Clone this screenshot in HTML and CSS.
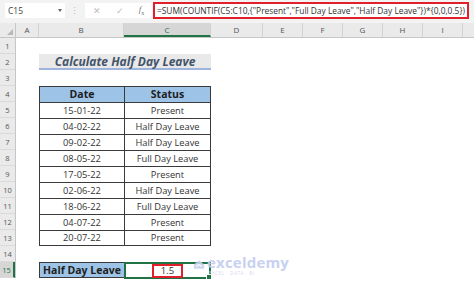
FILE: index.html
```html
<!DOCTYPE html>
<html lang="en">
<head>
  <meta charset="UTF-8">
  <meta name="viewport" content="width=device-width, initial-scale=1.0">
  <title>Calculate Half Day Leave</title>
  <link rel="stylesheet" href="styles.css">
</head>
<body>
  <div class="app">
    <div class="toolbar">
      <div class="namebox">
        <span>C15</span>
        <span class="caret"></span>
      </div>
      <div class="grip">⋮</div>
      <div class="fx-buttons">
        <span class="btn">✕</span>
        <span class="btn">✓</span>
        <span class="btn fx"><i>f</i><sub>x</sub></span>
      </div>
      <div class="formula">
        <span class="formula-box">=SUM(COUNTIF(C5:C10,{"Present","Full Day Leave","Half Day Leave"})*{0,0,0.5})</span>
      </div>
    </div>

    <div class="colheads">
      <div class="corner"><span class="tri"></span></div>
      <div class="colhead col-a">A</div>
      <div class="colhead col-b">B</div>
      <div class="colhead col-c active">C</div>
      <div class="colhead col-d">D</div>
      <div class="colhead col-e">E</div>
      <div class="colhead col-e">F</div>
      <div class="colhead col-e">G</div>
      <div class="colhead col-e">H</div>
      <div class="colhead col-e">I</div>
      <div class="colhead rest"></div>
    </div>

    <div class="sheet">
      <div class="rowheads">
        <div class="rowhead">1</div>
        <div class="rowhead">2</div>
        <div class="rowhead">3</div>
        <div class="rowhead">4</div>
        <div class="rowhead">5</div>
        <div class="rowhead">6</div>
        <div class="rowhead">7</div>
        <div class="rowhead">8</div>
        <div class="rowhead">9</div>
        <div class="rowhead">10</div>
        <div class="rowhead">11</div>
        <div class="rowhead">12</div>
        <div class="rowhead">13</div>
        <div class="rowhead">14</div>
        <div class="rowhead active">15</div>
      </div>

      <div class="cells">
        <div class="row"></div>
        <div class="row">
          <div class="title">Calculate Half Day Leave</div>
        </div>
        <div class="row"></div>
        <div class="row">
          <div class="cell col-b head">Date</div>
          <div class="cell col-c head last">Status</div>
        </div>
        <div class="row">
          <div class="cell col-b">15-01-22</div>
          <div class="cell col-c last">Present</div>
        </div>
        <div class="row">
          <div class="cell col-b">04-02-22</div>
          <div class="cell col-c last">Half Day Leave</div>
        </div>
        <div class="row">
          <div class="cell col-b">09-02-22</div>
          <div class="cell col-c last">Half Day Leave</div>
        </div>
        <div class="row">
          <div class="cell col-b">08-05-22</div>
          <div class="cell col-c last">Full Day Leave</div>
        </div>
        <div class="row">
          <div class="cell col-b">17-05-22</div>
          <div class="cell col-c last">Present</div>
        </div>
        <div class="row">
          <div class="cell col-b">02-06-22</div>
          <div class="cell col-c last">Half Day Leave</div>
        </div>
        <div class="row">
          <div class="cell col-b">18-06-22</div>
          <div class="cell col-c last">Full Day Leave</div>
        </div>
        <div class="row">
          <div class="cell col-b">04-07-22</div>
          <div class="cell col-c last">Present</div>
        </div>
        <div class="row">
          <div class="cell col-b bottom">20-07-22</div>
          <div class="cell col-c last bottom">Present</div>
        </div>
        <div class="row"></div>
        <div class="row">
          <div class="cell col-b head bottom label">Half Day Leave</div>
          <div class="cell col-c selected">
            <span class="result">1.5</span>
            <span class="handle"></span>
          </div>
        </div>
      </div>

      <div class="watermark">
        <svg class="logo" width="12" height="11" viewBox="0 0 14 12">
          <path d="M1 6 L7 1 L13 6 L13 11 L1 11 Z" fill="#c9d3ee"/>
          <path d="M4 8 L7 6 L10 8" fill="none" stroke="#fff" stroke-width="1.2"/>
        </svg>
        <div class="brand">
          <span class="name">exceldemy</span>
          <span class="tag">EXCEL · DATA · BI</span>
        </div>
      </div>
    </div>
  </div>
</body>
</html>
```

FILE: styles.css
```css
body {
  margin: 0;
  font-family: "Open Sans", "Noto Sans", sans-serif;
  background: #fff;
  overflow: hidden;
}

.app {
  width: 474px;
  height: 282px;
  overflow: hidden;
}

/* formula bar */
.toolbar {
  display: flex;
  align-items: center;
  height: 18px;
  padding-top: 1px;
  background: #f3f3f3;
  border-bottom: 4px solid #f3f3f3;
}

.namebox {
  display: flex;
  align-items: center;
  justify-content: space-between;
  width: 60px;
  height: 15px;
  margin-left: 5px;
  padding: 0 3px;
  box-sizing: border-box;
  background: #fff;
  font-size: 8.5px;
  color: #444;
}

.caret {
  width: 0;
  height: 0;
  border-left: 2.5px solid transparent;
  border-right: 2.5px solid transparent;
  border-top: 3px solid #666;
}

.grip {
  width: 20px;
  text-align: center;
  font-size: 9px;
  color: #bbb;
}

.fx-buttons {
  display: flex;
  align-items: center;
  justify-content: space-around;
  width: 67px;
  height: 15px;
  background: #fff;
  font-size: 9px;
  color: #bdbdbd;
}

.fx {
  color: #777;
  font-family: "Liberation Serif", serif;
  font-size: 9px;
}

.fx sub {
  font-size: 6px;
}

.formula {
  flex: 1;
  height: 17px;
  margin-left: 1px;
  margin-right: 5px;
  background: #fff;
  display: flex;
}

.formula-box {
  flex: 1;
  border: 2px solid #e0202a;
  padding: 0 2px;
  font-size: 8.4px;
  line-height: 13px;
  color: #333;
  white-space: nowrap;
  overflow: hidden;
}

/* column headers */
.colheads {
  display: flex;
  height: 15px;
  background: #eaeaea;
  border-bottom: 1px solid #c6c6c6;
  box-sizing: border-box;
}

.corner {
  position: relative;
  width: 16px;
  border-right: 1px solid #c6c6c6;
  box-sizing: border-box;
}

.tri {
  position: absolute;
  right: 2px;
  bottom: 2px;
  width: 0;
  height: 0;
  border-left: 6px solid transparent;
  border-bottom: 6px solid #b8b8b8;
}

.colhead {
  font-size: 8px;
  line-height: 14px;
  text-align: center;
  color: #555;
  border-right: 1px solid #d2d2d2;
  box-sizing: border-box;
  flex: none;
}

.colhead.active {
  background: #d6d6d6;
  border-bottom: 2px solid #217346;
  color: #217346;
}

.col-a { width: 23px; }
.col-b { width: 85px; }
.col-c { width: 87px; }
.col-d { width: 52px; }
.col-e { width: 40px; }
.rest { flex: 1; border-right: none; }

/* grid */
.sheet {
  position: relative;
  display: flex;
}

.rowheads {
  width: 16px;
  background: #eaeaea;
  border-right: 1px solid #c6c6c6;
  box-sizing: border-box;
}

.rowhead {
  height: 16px;
  line-height: 16px;
  font-size: 7.5px;
  text-align: center;
  color: #555;
  border-bottom: 1px solid #dadada;
  box-sizing: border-box;
}

.rowhead.active {
  background: #d6d6d6;
  color: #217346;
  border-right: 2px solid #217346;
}

.cells {
  flex: 1;
}

.row {
  display: flex;
  height: 16px;
  padding-left: 23px;
}

.title {
  width: 172px;
  height: 16px;
  box-sizing: border-box;
  background: #e9e9e9;
  border-bottom: 2px solid #9fb4dc;
  color: #44546a;
  font-size: 12px;
  font-weight: 700;
  font-style: italic;
  text-align: center;
  line-height: 15px;
}

.cell {
  height: 16px;
  box-sizing: border-box;
  border-left: 1px solid #3a3a3a;
  border-top: 1px solid #3a3a3a;
  font-size: 9.3px;
  line-height: 15px;
  text-align: center;
  color: #333;
}

.cell.last {
  border-right: 1px solid #3a3a3a;
}

.cell.bottom {
  border-bottom: 1px solid #3a3a3a;
  line-height: 14px;
}

.cell.head {
  background: #9dc3e6;
  font-weight: 700;
  font-size: 10.5px;
  color: #1e1e1e;
}

.cell.label {
  font-size: 10.5px;
}

.cell.selected {
  position: relative;
  display: flex;
  align-items: center;
  justify-content: center;
  border: 2px solid #217346;
  height: 17px;
}

.result {
  width: 31px;
  height: 14px;
  box-sizing: border-box;
  border: 2px solid #e0202a;
  font-size: 9.5px;
  line-height: 10px;
  color: #333;
}

.handle {
  position: absolute;
  right: -3px;
  bottom: -3px;
  width: 4px;
  height: 4px;
  background: #217346;
  border: 1px solid #fff;
}

/* watermark over the grid */
.watermark {
  position: absolute;
  left: 193px;
  top: 217px;
  display: flex;
  align-items: flex-start;
  gap: 2px;
  opacity: 0.9;
}

.logo {
  margin-top: 4px;
}

.brand {
  display: flex;
  flex-direction: column;
}

.brand .name {
  font-family: "Open Sans", sans-serif;
  font-size: 15px;
  font-weight: 700;
  line-height: 15px;
  color: #c2cdef;
  letter-spacing: 0.2px;
}

.brand .tag {
  font-size: 4.5px;
  line-height: 6px;
  color: #d2d8ea;
  letter-spacing: 0.6px;
  padding-left: 2px;
}
```
